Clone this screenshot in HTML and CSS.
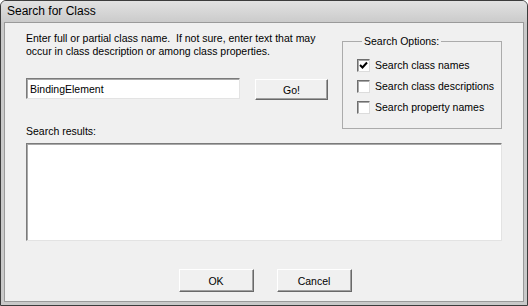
FILE: index.html
```html
<!DOCTYPE html>
<html lang="en">

<head>
    <meta charset="UTF-8">
    <title>Search for Class</title>
    <link rel="stylesheet" href="styles.css">
</head>

<body>

    <div class="window">
        <div class="titlebar">Search for Class</div>
        <div class="client">
            <div class="top">
                <div class="left">
                    <p class="hint">Enter full or partial class name.&nbsp; If not sure, enter text that may<br>occur in class description or among class properties.</p>
                    <div class="search-row">
                        <input type="text" class="textbox" value="BindingElement">
                        <button type="button" class="btn go">Go!</button>
                    </div>
                    <div class="results-label">Search results:</div>
                </div>
                <fieldset class="options">
                    <legend>Search Options:</legend>
                    <label class="check"><span class="box checked"><svg width="9" height="9" viewBox="0 0 9 9"><path d="M1 4 L3.5 6.5 L8 1.5" fill="none" stroke="#000" stroke-width="2"/></svg></span>Search class names</label>
                    <label class="check"><span class="box"></span>Search class descriptions</label>
                    <label class="check"><span class="box"></span>Search property names</label>
                </fieldset>
            </div>
            <div class="listbox"></div>
            <div class="buttons">
                <button type="button" class="btn">OK</button>
                <button type="button" class="btn">Cancel</button>
            </div>
        </div>
    </div>

</body>

</html>
```

FILE: styles.css
```css
body {
    margin: 0;
    font-family: "Liberation Sans", Arial, sans-serif;
    font-size: 10.5px;
    color: #000;
    background: #fff;
}

.window {
    width: 528px;
    height: 306px;
    box-sizing: border-box;
    border: 1px solid #3c3c3c;
    border-radius: 6px 6px 0 0;
    background: #c9c9c9;
    display: flex;
    flex-direction: column;
}

.titlebar {
    height: 21px;
    padding-left: 6px;
    font-size: 12px;
    line-height: 21px;
    border-radius: 5px 5px 0 0;
    background: linear-gradient(#e2e2e2, #cbcbcb);
}

.client {
    flex: 1;
    margin: 0 3px 3px 3px;
    border: 1px solid #9a9a9a;
    background: #f0f0f0;
    padding: 9px 20px 0 21px;
    display: flex;
    flex-direction: column;
}

.top {
    display: flex;
    align-items: flex-start;
    gap: 14px;
}

.left {
    width: 302px;
}

.hint {
    margin: 0;
    line-height: 13px;
    white-space: nowrap;
}

.search-row {
    display: flex;
    justify-content: space-between;
    margin-top: 20px;
}

.textbox {
    width: 214px;
    height: 21px;
    box-sizing: border-box;
    margin: 0;
    padding: 0 3px;
    font-family: inherit;
    font-size: 10.5px;
    border: 1px solid;
    border-color: #7b7b7b #e3e3e3 #e3e3e3 #7b7b7b;
    box-shadow: inset 1px 1px 0 #a8a8a8;
    background: #fff;
}

.btn {
    width: 75px;
    height: 23px;
    box-sizing: border-box;
    margin: 0;
    padding: 0;
    font-family: inherit;
    font-size: 10.5px;
    color: #000;
    background: #f0f0f0;
    border: 1px solid;
    border-color: #fff #696969 #696969 #fff;
    box-shadow: inset -1px -1px 0 #a0a0a0;
}

.go {
    width: 73px;
    height: 21px;
    margin-top: 1px;
}

.options {
    margin: 3px 0 0 0;
    padding: 11px 0 6px 14px;
    width: 160px;
    height: 94px;
    box-sizing: border-box;
    border: 1px solid #ababab;
    display: flex;
    flex-direction: column;
    gap: 8px;
}

.options legend {
    padding: 0 2px;
    margin-left: 5px;
    line-height: 13px;
}

.check {
    display: flex;
    align-items: center;
    gap: 5px;
    line-height: 13px;
}

.box {
    width: 13px;
    height: 13px;
    box-sizing: border-box;
    border: 1px solid;
    border-color: #6e6e6e #dcdcdc #dcdcdc #6e6e6e;
    box-shadow: inset 1px 1px 0 #a8a8a8;
    background: #fff;
    display: flex;
    align-items: center;
    justify-content: center;
}

.results-label {
    margin-top: 25px;
    line-height: 13px;
}

.listbox {
    margin-top: 5px;
    width: 476px;
    height: 98px;
    box-sizing: border-box;
    border: 1px solid;
    border-color: #7b7b7b #e3e3e3 #e3e3e3 #7b7b7b;
    box-shadow: inset 1px 1px 0 #a8a8a8;
    background: #fff;
}

.buttons {
    display: flex;
    justify-content: center;
    gap: 23px;
    margin-top: 28px;
    padding-left: 1px;
}
```
